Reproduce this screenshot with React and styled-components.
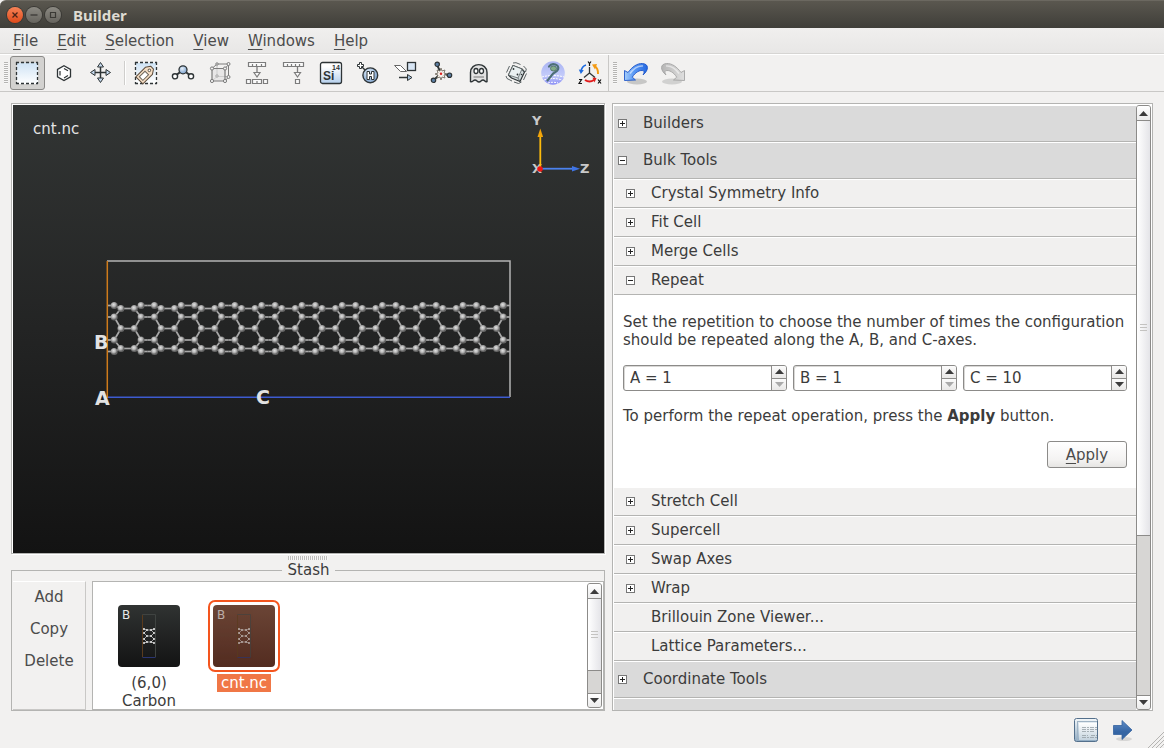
import React, { useState } from 'react';
import styled, { createGlobalStyle, css } from 'styled-components';

const GlobalStyle = createGlobalStyle`
  * {
    box-sizing: border-box;
  }

  body {
    margin: 0;
    background: #f2f1f0;
    color: #3c3c3c;
    font-family: "DejaVu Sans", sans-serif;
    font-size: 15px;
    line-height: 18px;
  }

  button, input {
    font: inherit;
    color: inherit;
  }
`;

/* ---------- toolbar icons, 24x24 ---------- */

const INK = '#2e3436';

const Icon = ({ children }) => (
  <svg width="24" height="24" viewBox="0 0 24 24" fill="none" stroke={INK} aria-hidden="true">
    {children}
  </svg>
);

const SelectIcon = () => (
  <Icon>
    <rect x="2" y="2" width="21" height="21" fill="url(#sky)" stroke="none" />
    <path
      d="M1 1.500h3M6 1.500h3M11 1.500h3M16 1.500h3M21 1.500h2M1 22.500h3M6 22.500h3M11 22.500h3M16 22.500h3M21 22.500h2M1.500 1v3M1.500 6v3M1.500 11v3M1.500 16v3M1.500 21v2M22.500 1v3M22.500 6v3M22.500 11v3M22.500 16v3M22.500 21v2"
      strokeWidth="1.300"
    />
  </Icon>
);

const BenzeneIcon = () => (
  <Icon>
    <path d="M12 4.700l6.500 3.700v7.500L12 19.600l-6.500-3.700V8.400z" fill="#fff" strokeWidth="1.300" />
    <path d="M8 9.900v4.500M12 7.400l4 2.300M12 16.900l4-2.300" strokeWidth="1.200" />
  </Icon>
);

const MoveIcon = () => (
  <Icon>
    <path d="M11.500 6v12M6 11.500h12" strokeWidth="1.500" />
    <g fill="#c5d9ee" strokeLinejoin="round">
      <path d="M11.500 1.500l3 4.500h-6zM11.500 21.500l3-4.500h-6zM1.500 11.500l4.500-3v6zM21.500 11.500l-4.500-3v6z" />
    </g>
  </Icon>
);

const TagIcon = () => (
  <Icon>
    <rect x="2" y="2" width="20" height="20" fill="url(#sky)" stroke="none" />
    <path
      d="M1 1.500h3M6 1.500h3M11 1.500h3M16 1.500h3M21 1.500h2M1 22.500h3M6 22.500h3M11 22.500h3M16 22.500h3M21 22.500h2M1.500 1v3M1.500 6v3M1.500 11v3M1.500 16v3M1.500 21v2M22.500 1v3M22.500 6v3M22.500 11v3M22.500 16v3M22.500 21v2"
      strokeWidth="1.300"
    />
    <g transform="rotate(45 11 13)">
      <path d="M6.500 8l3-4.500h4l3 4.500v13.500h-10z" fill="#f6dfc6" stroke="#5c4c3c" strokeLinejoin="round" />
      <rect x="9" y="11" width="5" height="8" fill="#fff" stroke="#6b6459" />
      <circle cx="11.500" cy="7.300" r="1.300" fill="#fff" stroke="#6b6459" />
    </g>
  </Icon>
);

const MoleculeIcon = () => (
  <Icon>
    <path d="M4 15l8-6 8 6" strokeWidth="2" />
    <circle cx="12" cy="8.800" r="4" fill="url(#ball)" strokeWidth="1.300" />
    <circle cx="4" cy="15.300" r="2.600" fill="#fff" strokeWidth="1.400" />
    <circle cx="20" cy="15.300" r="2.600" fill="#fff" strokeWidth="1.400" />
  </Icon>
);

const CubeIcon = () => (
  <Icon>
    <g stroke="#7c7c7c">
      <path d="M4 20l5-4.500h11M9 3.500v12" stroke="#bcbcbc" />
      <path d="M4 7.500h13v12.500h-13z" fill="#ddd" fillOpacity=".5" strokeWidth="1.200" />
      <path d="M4 7.500l5-4.500h11.500v13l-3.500 4M17 7.500l3.500-4" />
      <g fill="#f2f2f2">
        <circle cx="4" cy="7.500" r="1.600" />
        <circle cx="17" cy="7.500" r="1.600" />
        <circle cx="4" cy="20" r="1.600" />
        <circle cx="17" cy="20" r="1.600" />
        <circle cx="9" cy="3" r="1.200" />
        <circle cx="20.500" cy="3" r="1.500" />
        <circle cx="20.500" cy="16" r="1.500" />
      </g>
      <circle cx="9" cy="15" r="1.200" fill="#eee" stroke="#a5a5a5" />
    </g>
  </Icon>
);

const SplitIcon = () => (
  <Icon>
    <g stroke="#7c7c7c" strokeWidth="1.200" fill="#fafafa">
      <path d="M3.500 1.500h17v4h-17zM7.500 3v2M11.500 3v2M16.500 3v2" />
      <path d="M12 5.500v7" strokeWidth="1.300" />
      <path d="M9 11.500h6l-3 4.500z" />
      <path d="M1.500 18.500h4v4h-4zM7.500 18.500h9v4h-9zM18.500 18.500h4v4h-4zM12 20v2" />
    </g>
  </Icon>
);

const PickIcon = () => (
  <Icon>
    <g stroke="#7c7c7c" strokeWidth="1.200" fill="#fafafa">
      <path d="M1.500 1.500h20v4h-20zM5.500 3v2M9.500 3v2M13.500 3v2M17.500 3v2" />
      <path d="M15.500 5.500v7" strokeWidth="1.300" />
      <path d="M12.500 11.500h6l-3 4.500z" />
      <path d="M13.500 18.500h4v4h-4z" />
    </g>
  </Icon>
);

const ElementIcon = () => (
  <Icon>
    <rect x="1.500" y="1.500" width="21" height="21" rx="2" fill="url(#card)" strokeWidth="1.300" />
    <g fill={INK} stroke="none" fontFamily="Liberation Sans, sans-serif" fontWeight="bold">
      <text x="4" y="19" fontSize="12">Si</text>
      <text x="13" y="9" fontSize="7">14</text>
    </g>
  </Icon>
);

const HydrogenIcon = () => (
  <Icon>
    <path d="M6 6l4 4" strokeWidth="1.500" />
    <circle cx="14.300" cy="14.300" r="7.400" fill="url(#ball)" strokeWidth="1.400" />
    <path d="M3.500 1.500h2v2h2v2h-2v2h-2v-2h-2v-2h2z" fill="#fff" />
    <path d="M11 10.500h2.500v2.500h2v-2.500h2.500v8h-2.500v-3h-2v3h-2.500z" fill="#fff" />
  </Icon>
);

const TransformIcon = () => (
  <Icon>
    <path d="M1.500 4.500h6l6 6h-6z" fill="#fff" stroke="#666" />
    <rect x="14.500" y="1.500" width="8" height="8" fill="#d7e5f4" strokeWidth="1.300" />
    <path d="M6 16.500h9" strokeWidth="1.500" />
    <path d="M14.500 13.500l4.500 3-4.500 3z" fill="#a9c3dd" />
  </Icon>
);

const ClusterIcon = () => (
  <Icon>
    <path d="M7 4l4 8 8 2.500M11 12l-7.500 7.500" strokeWidth="1.800" />
    <path
      d="M11 7l1 3 3-1-1 3 3 1-3 1 1 3-3-1-1 3-1-3-3 1 1-3-3-1 3-1-1-3 3 1z"
      fill="#f4efe9"
      stroke="#6b6459"
      strokeWidth=".8"
    />
    <circle cx="11" cy="12.800" r="1.200" fill="#d22" stroke="none" />
    <g fill="#5c7fa5" strokeWidth="1.200">
      <circle cx="7.200" cy="3.300" r="2.200" />
      <circle cx="19.500" cy="14.200" r="2.200" />
      <circle cx="3.500" cy="19.300" r="2.200" />
    </g>
  </Icon>
);

const GhostIcon = () => (
  <Icon>
    <path
      d="M3.500 20.500V11.500c0-10.500 16.500-10.500 16.500 0v9c-2 1-2-1.500-4-1.500s-2 2-4 2-2-2-4-2-2.500 2.500-4.500 1.500z"
      fill="#e2e2e2"
      strokeWidth="1.400"
    />
    <ellipse cx="9" cy="10" rx="2" ry="2.500" fill="#fff" strokeWidth="1.300" />
    <ellipse cx="14.500" cy="10" rx="2" ry="2.500" fill="#fff" strokeWidth="1.300" />
    <path d="M6.500 16h10.500" stroke="#777" />
  </Icon>
);

const DiceIcon = () => (
  <Icon>
    <g strokeLinejoin="round">
      <path d="M4.500 14L9 4.500l9 3.500 2.500 3-4.500 9.500L7.500 17z" fill="#d2dadc" strokeWidth="1.200" />
      <path d="M9 4.500l9 3.500-4 9-9.500-3z" fill="#eaf0f1" stroke="#5c6466" strokeWidth=".8" />
      <path d="M14 17l2 3.500M18 8l2.500 3" stroke="#5c6466" strokeWidth=".8" />
    </g>
    <g fill={INK} stroke="none">
      <circle cx="9.500" cy="8" r=".9" />
      <circle cx="13.500" cy="13.500" r=".9" />
      <circle cx="17.500" cy="13.500" r=".8" />
    </g>
    <path
      d="M2.500 11.500l3-6.500M2 15l1 2.500 5 2.500M9 2l3-.3 4.500 1.800M19.500 5l2.800 3-.8 3M22.500 12.500l-3 6.500M17.500 21l-3 1.500-4.500-1.500"
      stroke="#5c6466"
    />
  </Icon>
);

const PluginIcon = () => (
  <Icon>
    <circle cx="12" cy="12" r="11.800" fill="url(#orb)" stroke="none" />
    <path d="M1 16c7-2 15-2 22 0M3 19c6-2 12-2 18 0M7 22c3-1 7-1 10 0" stroke="#fff" strokeDasharray="2 1" />
    <path d="M8 5.500c3-4.500 11-2 9 3-1 3-4.500 2.500-6 5.500l-4.500 5.500" stroke="#4d6f77" strokeWidth="2.200" strokeLinecap="round" />
    <ellipse cx="12.500" cy="7.500" rx="3" ry="2.500" fill="#83ab8a" stroke="#56776c" />
  </Icon>
);

const AxesIcon = () => (
  <Icon>
    <path d="M11.500 6v6l-5.500 4.500M11.500 12l5.500 4.500" strokeWidth="1.300" />
    <path d="M8 4c-3 .8-4.500 3-5 6.500" stroke="#1d6be0" strokeWidth="1.600" />
    <path d="M.8 8.500l5 .8-3 3.700z" fill="#1d6be0" stroke="none" />
    <path d="M20 13c.2-3.500-1-6.500-3.500-8" stroke="#f39a12" strokeWidth="2" />
    <path d="M14 3.500l5-.5-2 5.500z" fill="#f39a12" stroke="none" />
    <path d="M7 19c3 2 6 2 9 0" stroke="#e01b1b" strokeWidth="2" />
    <path d="M14.500 16.500l4 .5-2 4.500z" fill="#e01b1b" stroke="none" />
    <path
      d="M10 .5l1.500 2 1.500-2M11.500 2.500v2.500M1 18.500h2.500l-2.500 4h3M20 18.500l3 4M23 18.500l-3 4"
      stroke="#111"
      strokeWidth="1.200"
    />
  </Icon>
);

const UndoArrow = ({ fill, stroke }) => (
  <>
    <ellipse cx="13" cy="20.500" rx="10" ry="3" fill="#777" fillOpacity=".35" stroke="none" />
    <path
      d="M.5 9.500v10l11-.5-3.200-2.800C11 11.500 16 8.500 19.500 9.800c1 .8.500 2.700-.5 4.200 6-5 6-11-.5-11.500-5.500-.3-10.500 3.500-14.500 9z"
      fill={fill}
      stroke={stroke}
      strokeWidth=".9"
      strokeLinejoin="round"
    />
    <path d="M6 12.500c4-5.500 9-8 13-7.500" stroke="#fff" strokeOpacity=".55" strokeWidth="1.500" />
  </>
);

const UndoIcon = () => (
  <Icon>
    <UndoArrow fill="url(#undo)" stroke="#1f56c8" />
  </Icon>
);

const RedoIcon = () => (
  <Icon>
    <g transform="translate(24 0) scale(-1 1)" opacity=".75">
      <UndoArrow fill="url(#redo)" stroke="#8a8a8a" />
    </g>
  </Icon>
);

const NotesIcon = () => (
  <Icon>
    <rect x=".5" y=".5" width="23" height="23" rx="2" fill="url(#notes)" stroke="#54708c" />
    <path d="M3 3.500h20M3.500 3v19" stroke="#9fb3c4" />
    <rect x="5" y="5" width="18" height="17" fill="url(#paper)" stroke="none" />
    <path
      d="M8 9.500h15M8 11.500h15M8 13.500h12M8 17.500h6M17 17.500h6M8 19.500h15"
      stroke="#959fa6"
      strokeWidth=".8"
      strokeDasharray="4 1 2 1"
    />
  </Icon>
);

const NextIcon = () => (
  <Icon>
    <ellipse cx="13" cy="21" rx="8" ry="2" fill="#999" fillOpacity=".3" stroke="none" />
    <path d="M2.500 7.500h8.500v-5l10 9.500-10 9.500v-5H2.500z" fill="url(#next)" stroke="#33629f" strokeWidth=".8" />
  </Icon>
);

const Gradients = () => (
  <HiddenSvg aria-hidden="true">
    <defs>
      <linearGradient id="sky" x2="0" y2="1">
        <stop offset="0" stopColor="#cfe3f5" />
        <stop offset="1" stopColor="#fff" />
      </linearGradient>
      <linearGradient id="card" x2="0" y2="1">
        <stop offset=".2" stopColor="#fff" />
        <stop offset="1" stopColor="#b4cfec" />
      </linearGradient>
      <radialGradient id="ball" cx=".4" cy=".35">
        <stop offset="0" stopColor="#e8f1fa" />
        <stop offset="1" stopColor="#93b3d8" />
      </radialGradient>
      <linearGradient id="orb" x2="0" y2="1">
        <stop offset="0" stopColor="#a9b3f2" />
        <stop offset=".6" stopColor="#c3cbfa" />
        <stop offset="1" stopColor="#8c90f6" />
      </linearGradient>
      <linearGradient id="undo" x2="1">
        <stop offset="0" stopColor="#a5cdfb" />
        <stop offset=".4" stopColor="#5b9af5" />
        <stop offset="1" stopColor="#2468e0" />
      </linearGradient>
      <linearGradient id="redo" x2="1">
        <stop offset="0" stopColor="#dadada" />
        <stop offset="1" stopColor="#a2a2a2" />
      </linearGradient>
      <linearGradient id="notes" x2="0" y2="1">
        <stop offset="0" stopColor="#f4f8fa" />
        <stop offset="1" stopColor="#8eaac2" />
      </linearGradient>
      <linearGradient id="paper" x2="0" y2="1">
        <stop offset="0" stopColor="#fff" />
        <stop offset="1" stopColor="#c4d3de" />
      </linearGradient>
      <linearGradient id="next" x2="0" y2="1">
        <stop offset="0" stopColor="#5f8cc6" />
        <stop offset=".6" stopColor="#3465a4" />
      </linearGradient>
      <radialGradient id="atom" cx=".42" cy=".38">
        <stop offset="0" stopColor="#e2e2e2" />
        <stop offset=".55" stopColor="#b4b4b4" />
        <stop offset="1" stopColor="#666" />
      </radialGradient>
    </defs>
  </HiddenSvg>
);

/* ---------- data ---------- */

const MENUS = ['File', 'Edit', 'Selection', 'View', 'Windows', 'Help'];

const MODE_TOOLS = [
  ['Select', SelectIcon],
  ['Draw', BenzeneIcon],
  ['Move', MoveIcon],
];

const EDIT_TOOLS = [
  ['Tag selection', TagIcon],
  ['Bonds', MoleculeIcon],
  ['Cell', CubeIcon],
  ['Split', SplitIcon],
  ['Pick', PickIcon],
  ['Element', ElementIcon],
  ['Passivate', HydrogenIcon],
  ['Transform', TransformIcon],
  ['Cluster', ClusterIcon],
  ['Ghost atoms', GhostIcon],
  ['Randomize', DiceIcon],
  ['Plugin', PluginIcon],
  ['Rotate axes', AxesIcon],
];

const TOOLS_BEFORE = ['Crystal Symmetry Info', 'Fit Cell', 'Merge Cells'];
const TOOLS_AFTER = ['Stretch Cell', 'Supercell', 'Swap Axes', 'Wrap'];
const ACTIONS = ['Brillouin Zone Viewer...', 'Lattice Parameters...'];

/* ---------- 3D view ---------- */

const CELL = 40.25;
const ORIGIN = 94.5;
// the rows alternate between the inner (1/3, 2/3) and outer (1/6, 5/6) positions
const ROWS = [200.5, 203.5, 212, 223.5, 235, 243.5, 246.5];

const buildTube = (cells) => {
  const atoms = [];
  const bonds = [];
  for (let k = 0; k < cells; k++) {
    const x0 = ORIGIN + k * CELL;
    ROWS.forEach((y, i) => {
      const inner = i % 2 === 1;
      const left = x0 + CELL * (inner ? 1 / 3 : 1 / 6);
      const right = x0 + CELL * (inner ? 2 / 3 : 5 / 6);
      atoms.push([left, y], [right, y]);
      if (inner) {
        bonds.push([left, y, right, y]);
      } else {
        bonds.push([x0, y, left, y], [right, y, x0 + CELL, y]);
      }
      if (i > 0) {
        const prevLeft = x0 + CELL * (inner ? 1 / 6 : 1 / 3);
        const prevRight = x0 + CELL * (inner ? 5 / 6 : 2 / 3);
        bonds.push([prevLeft, ROWS[i - 1], left, y], [prevRight, ROWS[i - 1], right, y]);
      }
    });
  }
  return { atoms, bonds };
};

const Scene = () => {
  const { atoms, bonds } = buildTube(10);
  return (
    <SceneSvg viewBox="0 0 591 448" role="img" aria-label="cnt.nc">
      <text x="20" y="29" fontSize="15" fill="#e4e4e4">cnt.nc</text>
      <path d="M94 156h403v136" fill="none" stroke="#b4b4b4" strokeWidth="1.500" />
      <g stroke="#a8a8a8" strokeWidth="1.700">
        {bonds.map(([x1, y1, x2, y2], i) => (
          <line key={i} x1={x1} y1={y1} x2={x2} y2={y2} />
        ))}
      </g>
      {atoms.map(([x, y], i) => (
        <circle key={i} cx={x} cy={y} r="3.500" fill="url(#atom)" />
      ))}
      <path d="M94.300 156v137" stroke="#cf7b1b" strokeWidth="1.500" />
      <path d="M95 292.300h402" stroke="#3d5bd0" strokeWidth="1.600" />
      <g fill="#e2e2e2" fontSize="19" fontWeight="bold">
        <text x="82" y="300">A</text>
        <text x="81" y="244">B</text>
        <text x="243" y="299">C</text>
      </g>
      <g fill="#c9c9c9" fontSize="13" fontWeight="bold">
        <text x="519" y="20">Y</text>
        <text x="567" y="68">Z</text>
        <text x="519" y="68">X</text>
      </g>
      <path d="M527.300 64V32" stroke="#fdbb0c" strokeWidth="1.800" />
      <path d="M524.500 32l2.800-8.500 2.800 8.500z" fill="#f2a50a" />
      <path d="M528 63.700h32" stroke="#4b82ee" strokeWidth="1.800" />
      <path d="M559 61l8 2.700-8 2.800z" fill="#3f74e6" />
      <circle cx="527" cy="64" r="2.800" fill="#f01414" />
    </SceneSvg>
  );
};

const THUMB_ATOMS = [
  [26, 24], [36, 24], [29, 25], [33, 25], [26, 28], [36, 28], [29, 31], [33, 31],
  [26, 34], [36, 34], [29, 37], [33, 37], [26, 38], [36, 38],
];

const Thumbnail = ({ active }) => (
  <Thumb $active={active} viewBox="0 0 62 62" aria-hidden="true">
    <g opacity={active ? 0.65 : 1}>
      <text x="4" y="14" fontSize="12" fill="#e8e8e8">B</text>
      <path d="M24.500 52V9.500h13V52" fill="none" stroke="#3f4341" />
      <path d="M24.500 10v42" stroke="#5a3b1d" />
      <path d="M24.500 52.500h13" stroke="#2a3572" />
      <path
        d="M25 24l4 1h4l4-1M26 28l3-3M33 25l3 3M26 28l3 3h4l3-3M26 34l3-3M33 31l3 3M26 34l3 3h4l3-3M26 38l3-1M33 37l3 1"
        stroke="#b9b9b9"
        strokeWidth=".8"
        fill="none"
      />
      <g fill="#e5e5e5">
        {THUMB_ATOMS.map(([x, y]) => (
          <circle key={`${x}-${y}`} cx={x} cy={y} r="1" />
        ))}
      </g>
    </g>
  </Thumb>
);

/* ---------- parts ---------- */

const Caret = ({ down }) => (
  <svg width="9" height="5" viewBox="0 0 9 5" fill="currentColor" aria-hidden="true">
    <path d={down ? 'M0 0h9L4.500 5z' : 'M0 5h9L4.500 0z'} />
  </svg>
);

const ScrollBar = ({ thumb, rest }) => (
  <ScrollTrack>
    <ScrollButton aria-label="Scroll up"><Caret /></ScrollButton>
    <ScrollThumb $size={thumb}>
      <i /><i /><i />
    </ScrollThumb>
    <ScrollRest $size={rest} />
    <ScrollButton aria-label="Scroll down" $last><Caret down /></ScrollButton>
  </ScrollTrack>
);

const TreeBox = ({ open }) => (
  <svg width="9" height="9" viewBox="0 0 9 9" fill="none" aria-hidden="true">
    <rect x=".5" y=".5" width="8" height="8" fill="#fff" stroke="#777" />
    <path d={open ? 'M2 4.500h5' : 'M2 4.500h5M4.500 2v5'} stroke="#222" />
  </svg>
);

const Spin = ({ axis, initial }) => {
  const [count, setCount] = useState(initial);

  const onChange = (e) => {
    const n = parseInt(e.target.value.replace(/\D/g, ''), 10);
    setCount(n || 1);
  };

  return (
    <SpinBox>
      <SpinInput aria-label={axis} value={`${axis} = ${count}`} onChange={onChange} />
      <SpinButtons>
        <SpinButton aria-label={`Increase ${axis}`} onClick={() => setCount(count + 1)}>
          <Caret />
        </SpinButton>
        <SpinButton aria-label={`Decrease ${axis}`} disabled={count <= 1} onClick={() => setCount(count - 1)}>
          <Caret down />
        </SpinButton>
      </SpinButtons>
    </SpinBox>
  );
};

const Group = ({ name, open }) => (
  <GroupRow aria-expanded={!!open}>
    <TreeBox open={open} />
    <RowLabel>{name}</RowLabel>
  </GroupRow>
);

const Tool = ({ name, open, onClick }) => (
  <ToolRow aria-expanded={!!open} onClick={onClick}>
    <TreeBox open={open} />
    <RowLabel>{name}</RowLabel>
  </ToolRow>
);

const App = () => {
  const [mode, setMode] = useState('Select');
  const [repeatOpen, setRepeatOpen] = useState(true);
  const [stashed, setStashed] = useState('cnt.nc');

  return (
    <Window>
      <GlobalStyle />
      <Gradients />
      <TitleBar>
        <WindowButton aria-label="Close" $close>
          <svg width="16" height="16" viewBox="0 0 16 16" stroke="#4a2418" strokeWidth="1.300">
            <path d="M5.500 5.500l5 5M10.500 5.500l-5 5" />
          </svg>
        </WindowButton>
        <WindowButton aria-label="Minimize">
          <svg width="16" height="16" viewBox="0 0 16 16" stroke="#3a3935" strokeWidth="1.300">
            <path d="M4.500 8h7" />
          </svg>
        </WindowButton>
        <WindowButton aria-label="Maximize">
          <svg width="16" height="16" viewBox="0 0 16 16" stroke="#3a3935" strokeWidth="1.200" fill="none">
            <path d="M5.500 5.500h5v5h-5z" />
          </svg>
        </WindowButton>
        <Title>Builder</Title>
      </TitleBar>

      <MenuBar>
        {MENUS.map(name => (
          <MenuItem key={name}>
            <Mnemonic>{name[0]}</Mnemonic>{name.slice(1)}
          </MenuItem>
        ))}
      </MenuBar>

      <ToolBar>
        <ToolGroup>
          <Grip />
          {MODE_TOOLS.map(([name, Glyph]) => (
            <ToolButton key={name} aria-label={name} $active={mode === name} onClick={() => setMode(name)}>
              <Glyph />
            </ToolButton>
          ))}
          <Separator />
          {EDIT_TOOLS.map(([name, Glyph]) => (
            <ToolButton key={name} aria-label={name}><Glyph /></ToolButton>
          ))}
        </ToolGroup>
        <ToolGroup>
          <Grip />
          <ToolButton aria-label="Undo"><UndoIcon /></ToolButton>
          <ToolButton aria-label="Redo"><RedoIcon /></ToolButton>
        </ToolGroup>
      </ToolBar>

      <Main>
        <LeftColumn>
          <Viewer><Scene /></Viewer>
          <Splitter />
          <Stash>
            <StashLegend>Stash</StashLegend>
            <StashBody>
              <StashActions>
                <StashAction>Add</StashAction>
                <StashAction>Copy</StashAction>
                <StashAction>Delete</StashAction>
              </StashActions>
              <StashList>
                <StashItems>
                  {['(6,0) Carbon', 'cnt.nc'].map(name => (
                    <StashItem key={name} aria-pressed={stashed === name} onClick={() => setStashed(name)}>
                      <ThumbFrame $active={stashed === name}>
                        <Thumbnail active={stashed === name} />
                      </ThumbFrame>
                      <StashLabel $active={stashed === name}>{name}</StashLabel>
                    </StashItem>
                  ))}
                </StashItems>
                <ScrollBar thumb={72} rest={22} />
              </StashList>
            </StashBody>
          </Stash>
        </LeftColumn>

        <Panel>
          <PanelScroll>
            <Group name="Builders" />
            <Group name="Bulk Tools" open />
            {TOOLS_BEFORE.map(name => <Tool key={name} name={name} />)}
            <Tool name="Repeat" open={repeatOpen} onClick={() => setRepeatOpen(!repeatOpen)} />
            {repeatOpen && (
              <RepeatForm>
                <Text>
                  Set the repetition to choose the number of times the configuration
                  should be repeated along the A, B, and C-axes.
                </Text>
                <Spins>
                  <Spin axis="A" initial={1} />
                  <Spin axis="B" initial={1} />
                  <Spin axis="C" initial={10} />
                </Spins>
                <Text>To perform the repeat operation, press the <b>Apply</b> button.</Text>
                <ApplyButton><Mnemonic>A</Mnemonic>pply</ApplyButton>
              </RepeatForm>
            )}
            {TOOLS_AFTER.map(name => <Tool key={name} name={name} />)}
            {ACTIONS.map(name => (
              <ActionRow key={name}><RowLabel>{name}</RowLabel></ActionRow>
            ))}
            <Group name="Coordinate Tools" />
            <GroupRow aria-hidden="true" tabIndex={-1} />
          </PanelScroll>
          <ScrollBar thumb={415} rest={160} />
        </Panel>
      </Main>

      <Footer>
        <FooterButton aria-label="Script"><NotesIcon /></FooterButton>
        <FooterButton aria-label="Send to"><NextIcon /></FooterButton>
        <svg width="16" height="16" viewBox="0 0 16 16" stroke="#b5b4b2" aria-hidden="true">
          <path d="M0 16L16 0M4 16L16 4M8 16l8-8M12 16l4-4" />
        </svg>
      </Footer>
    </Window>
  );
};

export default App;

/* ---------- styles ---------- */

const LINE = '#b4b4b2';

const plainButton = css`
  margin: 0;
  padding: 0;
  border: 0;
  background: none;
`;

const HiddenSvg = styled.svg`
  position: absolute;
  width: 0;
  height: 0;
`;

const Window = styled.div`
  display: flex;
  flex-direction: column;
  height: 100vh;
  overflow: hidden;
`;

const TitleBar = styled.header`
  display: flex;
  align-items: center;
  gap: 3px;
  flex: none;
  height: 28px;
  padding-left: 7px;
  border-top: 1px solid #6b6860;
  border-radius: 6px 0 0 0;
  background: linear-gradient(#5a574f, #3f3e39);
`;

const WindowButton = styled.button`
  ${plainButton}
  display: flex;
  width: 16px;
  height: 16px;
  border-radius: 8px;
  background: ${p => (p.$close ? 'linear-gradient(#f78357, #df4a1a)' : 'linear-gradient(#8b8982, #66645e)')};
  box-shadow: 0 0 0 1px #3a3935;
`;

const Title = styled.h1`
  margin: 0 0 0 9px;
  font: bold 15px/18px "Noto Sans", sans-serif;
  color: #dfdbd2;
`;

const MenuBar = styled.nav`
  display: flex;
  gap: 1px;
  flex: none;
  height: 26px;
  padding: 1px 0 0 4px;
  border-bottom: 1px solid #d6d5d3;
  background: linear-gradient(#f0efee, #e8e7e6);
`;

const MenuItem = styled.button`
  ${plainButton}
  padding: 0 9px;
  color: #4c4c4c;
`;

const Mnemonic = styled.span`
  text-decoration: underline 1px;
  text-underline-offset: 3px;
`;

const ToolBar = styled.div`
  display: flex;
  flex: none;
  height: 38px;
  border-top: 1px solid #fff;
  border-bottom: 1px solid #c9c8c6;
`;

const ToolGroup = styled.div`
  display: flex;
  align-items: center;
  gap: 2px;
  padding-left: 4px;

  & + & {
    border-left: 1px solid #c9c8c6;
  }
`;

const Grip = styled.div`
  width: 4px;
  height: 22px;
  background: repeating-linear-gradient(#b5b4b2 0 1px, #f8f8f8 1px 2px);
`;

const ToolButton = styled.button`
  ${plainButton}
  display: flex;
  align-items: center;
  justify-content: center;
  width: 35px;
  height: 34px;
  padding-right: 1px;
  border: 1px solid ${p => (p.$active ? '#8b8a88' : 'transparent')};
  border-radius: 3px;
  background: ${p => (p.$active ? '#d3d2d0' : 'none')};
`;

const Separator = styled.div`
  width: 2px;
  height: 24px;
  margin: 0 1px 0 3px;
  border-left: 1px solid #cfcecc;
  border-right: 1px solid #fff;
`;

const Main = styled.main`
  display: grid;
  grid-template-columns: 594fr 541fr;
  grid-template-rows: minmax(0, 1fr);
  gap: 7px;
  flex: 1;
  min-height: 0;
  padding: 11px 11px 0;
`;

const LeftColumn = styled.div`
  display: flex;
  flex-direction: column;
  min-width: 0;
`;

const Viewer = styled.div`
  flex: 1;
  min-height: 0;
  padding: 1px 0 0 1px;
  border: 1px solid ${LINE};
  background: #fff;
  box-shadow: 1px 1px #fff;
`;

const SceneSvg = styled.svg`
  display: block;
  width: 100%;
  height: 100%;
  background: linear-gradient(#323534, #232424 50%, #131313);
`;

const Splitter = styled.div`
  flex: none;
  align-self: center;
  width: 40px;
  height: 4px;
  margin: 2px 0 1px;
  background: repeating-linear-gradient(90deg, #c0bfbd 0 1px, #f8f8f8 1px 2px);
`;

const Stash = styled.fieldset`
  flex: none;
  min-width: 0;
  margin: 0;
  padding: 2px 0 0 1px;
  border: 1px solid ${LINE};
`;

const StashLegend = styled.legend`
  margin: 0 auto;
  padding: 0 6px;
`;

const StashBody = styled.div`
  display: flex;
  gap: 6px;
  height: 129px;
`;

const StashActions = styled.div`
  display: flex;
  flex-direction: column;
  width: 73px;
  border-top: 1px solid #fff;
  border-right: 1px solid #c9c8c6;
  border-bottom: 1px solid #c9c8c6;
`;

const StashAction = styled.button`
  ${plainButton}
  height: 32px;
  padding-bottom: 2px;
  color: #4c4c4c;
`;

const StashList = styled.div`
  display: flex;
  flex: 1;
  min-width: 0;
  padding: 1px;
  border: 1px solid ${LINE};
  background: #fff;
`;

const StashItems = styled.div`
  display: flex;
  align-items: flex-start;
  gap: 1px;
  flex: 1;
  min-width: 0;
  padding: 17px 8px 0;
`;

const StashItem = styled.button`
  ${plainButton}
  display: flex;
  flex-direction: column;
  align-items: center;
  gap: 2px;
  width: 94px;
`;

const ThumbFrame = styled.div`
  width: 72px;
  height: 72px;
  padding: 3px;
  border: 2px solid ${p => (p.$active ? '#f4551e' : 'transparent')};
  border-radius: 7px;
`;

const Thumb = styled.svg`
  display: block;
  width: 62px;
  height: 62px;
  border-radius: 4px;
  background: ${p => (p.$active ? 'linear-gradient(#6b4536, #532c20)' : 'linear-gradient(#303332, #131313)')};
`;

const StashLabel = styled.span`
  max-width: 64px;
  padding: 0 4px;
  background: ${p => (p.$active ? '#f07746' : 'none')};
  color: ${p => (p.$active ? '#fff' : 'inherit')};
`;

const ScrollTrack = styled.div`
  display: flex;
  flex-direction: column;
  flex: none;
  width: 15px;
  border: 1px solid #8c8b89;
  border-radius: 3px;
  background: #d7d6d4;
  overflow: hidden;
`;

const ScrollButton = styled.button`
  ${plainButton}
  display: flex;
  align-items: center;
  justify-content: center;
  flex: none;
  height: 14px;
  background: linear-gradient(#fff, #ececec);
  border-top: ${p => (p.$last ? '1px solid #8c8b89' : '0')};
`;

const ScrollThumb = styled.div`
  display: flex;
  flex-direction: column;
  align-items: center;
  justify-content: center;
  gap: 2px;
  flex: ${p => p.$size} 1 0;
  border-top: 1px solid #8c8b89;
  border-bottom: 1px solid #8c8b89;
  background: linear-gradient(90deg, #fff, #e4e4e8);

  i {
    width: 7px;
    height: 1px;
    background: #c4c3c1;
  }
`;

const ScrollRest = styled.div`
  flex: ${p => p.$size} 1 0;
`;

const Panel = styled.section`
  display: flex;
  min-width: 0;
  padding: 1px 1px 0;
  border: 1px solid ${LINE};
  background: #fff;
`;

const PanelScroll = styled.div`
  display: flex;
  flex-direction: column;
  flex: 1;
  min-width: 0;
  overflow: hidden;
`;

const Row = styled.button`
  ${plainButton}
  display: flex;
  align-items: center;
  gap: 16px;
  flex: none;
  border-top: 1px solid #fff;
  border-bottom: 1px solid ${LINE};
  text-align: left;
`;

const RowLabel = styled.span`
  padding-bottom: 1px;
`;

const GroupRow = styled(Row)`
  height: 37px;
  padding-left: 4px;
  background: #dadada;
`;

const ToolRow = styled(Row)`
  height: 29px;
  padding-left: 12px;
  background: #f1f0ef;
`;

const ActionRow = styled(ToolRow)`
  padding-left: 37px;
`;

const RepeatForm = styled.div`
  display: flex;
  flex-direction: column;
  gap: 16px;
  flex: none;
  padding: 18px 9px 19px;
`;

const Text = styled.p`
  margin: 0;
`;

const Spins = styled.div`
  display: flex;
  gap: 6px;
`;

const SpinBox = styled.div`
  display: flex;
  flex: 1;
  min-width: 0;
  height: 26px;
  border: 1px solid #8c8b89;
  border-radius: 3px;
  background: #fff;
  box-shadow: inset 1px 1px #d9d8d6;
  overflow: hidden;
`;

const SpinInput = styled.input`
  flex: 1;
  min-width: 0;
  padding: 0 6px;
  border: 0;
  outline: none;
  background: none;
`;

const SpinButtons = styled.div`
  display: flex;
  flex-direction: column;
  width: 15px;
  border-left: 1px solid #8c8b89;
`;

const SpinButton = styled.button`
  ${plainButton}
  display: flex;
  align-items: center;
  justify-content: center;
  flex: 1;
  background: linear-gradient(#fbfbfb, #e9e8e7);

  & + & {
    border-top: 1px solid #8c8b89;
  }

  &:disabled {
    color: #aaa;
  }
`;

const ApplyButton = styled.button`
  align-self: flex-end;
  width: 80px;
  height: 27px;
  padding: 0;
  border: 1px solid #8c8b89;
  border-radius: 3px;
  background: linear-gradient(#fff, #f4f3f2 70%, #e6e5e3);
  color: #4c4c4c;
`;

const Footer = styled.footer`
  display: flex;
  align-items: center;
  justify-content: flex-end;
  gap: 1px;
  flex: none;
  height: 37px;

  > svg {
    align-self: flex-end;
    margin-left: 6px;
  }
`;

const FooterButton = styled.button`
  ${plainButton}
  display: flex;
  align-items: center;
  justify-content: center;
  width: 36px;
  height: 36px;
`;
